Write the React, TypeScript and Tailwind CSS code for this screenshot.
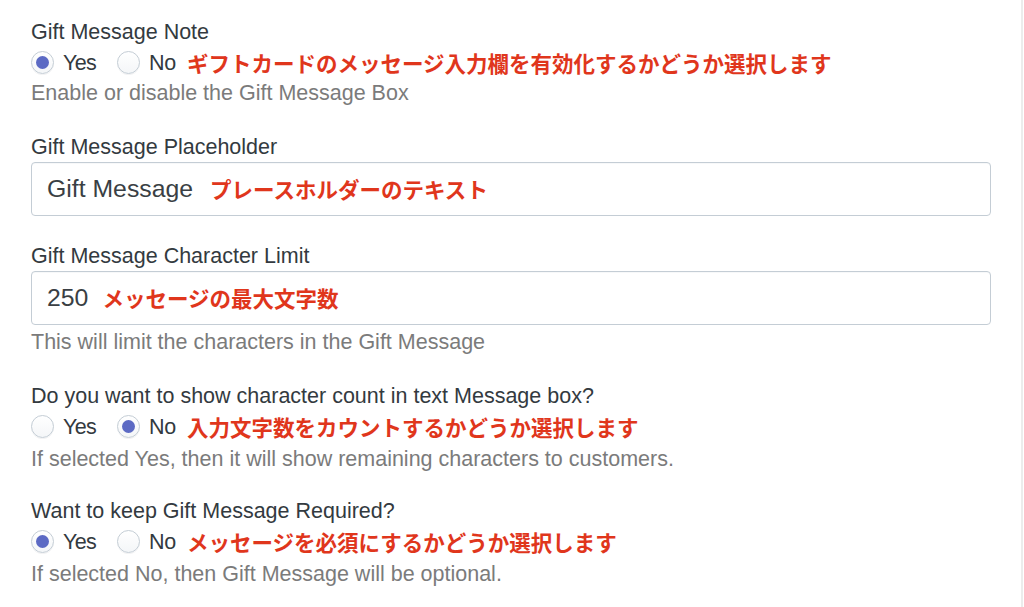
import React from "react";

const latin = "font-['Liberation_Sans',Arial,sans-serif]";
const jp = "font-['Noto_Sans_CJK_JP',sans-serif] font-bold text-[#e0361c] text-[21.5px]";

function Radio({ checked }: { checked: boolean }) {
  return (
    <span className="w-[23px] h-[23px] rounded-full border border-[#c4cdd5] bg-gradient-to-b from-white to-[#f4f6f8] shadow-[0_1px_0_rgba(22,29,37,0.05)] flex items-center justify-center shrink-0">
      {checked && <span className="w-[13px] h-[13px] rounded-full bg-[#5c6ac4]"></span>}
    </span>
  );
}

function RadioRow({ value, note }: { value: "yes" | "no"; note: string }) {
  return (
    <div className="flex items-center h-[31px]">
      <Radio checked={value === "yes"} />
      <span className="ml-[9px] w-[34px] tracking-[-0.6px]">Yes</span>
      <span className="ml-[20px]">
        <Radio checked={value === "no"} />
      </span>
      <span className="ml-[9px] w-[28px] tracking-[-0.4px]">No</span>
      <span className={`ml-[10px] ${jp}`}>{note}</span>
    </div>
  );
}

function InputBox({ value, note, gap }: { value: string; note: string; gap: string }) {
  return (
    <div className="w-[960px] h-[54px] border border-[#c4cdd5] rounded-[4px] bg-white shadow-[inset_0_1px_0_rgba(99,115,129,0.05)] flex items-center px-[15px]">
      <span className="text-[24.8px] text-[#3a3f44]">{value}</span>
      <span className={`${gap} ${jp}`}>{note}</span>
    </div>
  );
}

export default function App() {
  return (
    <div className="min-h-[607px] bg-white flex">
      <div
        className={`w-[1023px] border-r-2 border-[#ececec] pl-[31px] pt-[17px] text-[21.5px] leading-[30px] text-[#333a40] ${latin}`}
      >
        {/* Gift Message Note */}
        <div>
          <div>Gift Message Note</div>
          <RadioRow value="yes" note="ギフトカードのメッセージ入力欄を有効化するかどうか選択します" />
          <div className="text-[#7b7b7b]">Enable or disable the Gift Message Box</div>
        </div>

        {/* Placeholder */}
        <div className="mt-[24px]">
          <div>Gift Message Placeholder</div>
          <InputBox value="Gift Message" note="プレースホルダーのテキスト" gap="ml-[17px]" />
        </div>

        {/* Character limit */}
        <div className="mt-[25px]">
          <div>Gift Message Character Limit</div>
          <InputBox value="250" note="メッセージの最大文字数" gap="ml-[14px]" />
          <div className="pt-[2px] text-[#7b7b7b]">This will limit the characters in the Gift Message</div>
        </div>

        {/* Character count */}
        <div className="mt-[24px]">
          <div>Do you want to show character count in text Message box?</div>
          <RadioRow value="no" note="入力文字数をカウントするかどうか選択します" />
          <div className="pt-[2px] text-[#7b7b7b]">
            If selected Yes, then it will show remaining characters to customers.
          </div>
        </div>

        {/* Required */}
        <div className="mt-[22px]">
          <div>Want to keep Gift Message Required?</div>
          <RadioRow value="yes" note="メッセージを必須にするかどうか選択します" />
          <div className="pt-[2px] text-[#7b7b7b]">If selected No, then Gift Message will be optional.</div>
        </div>
      </div>
    </div>
  );
}
